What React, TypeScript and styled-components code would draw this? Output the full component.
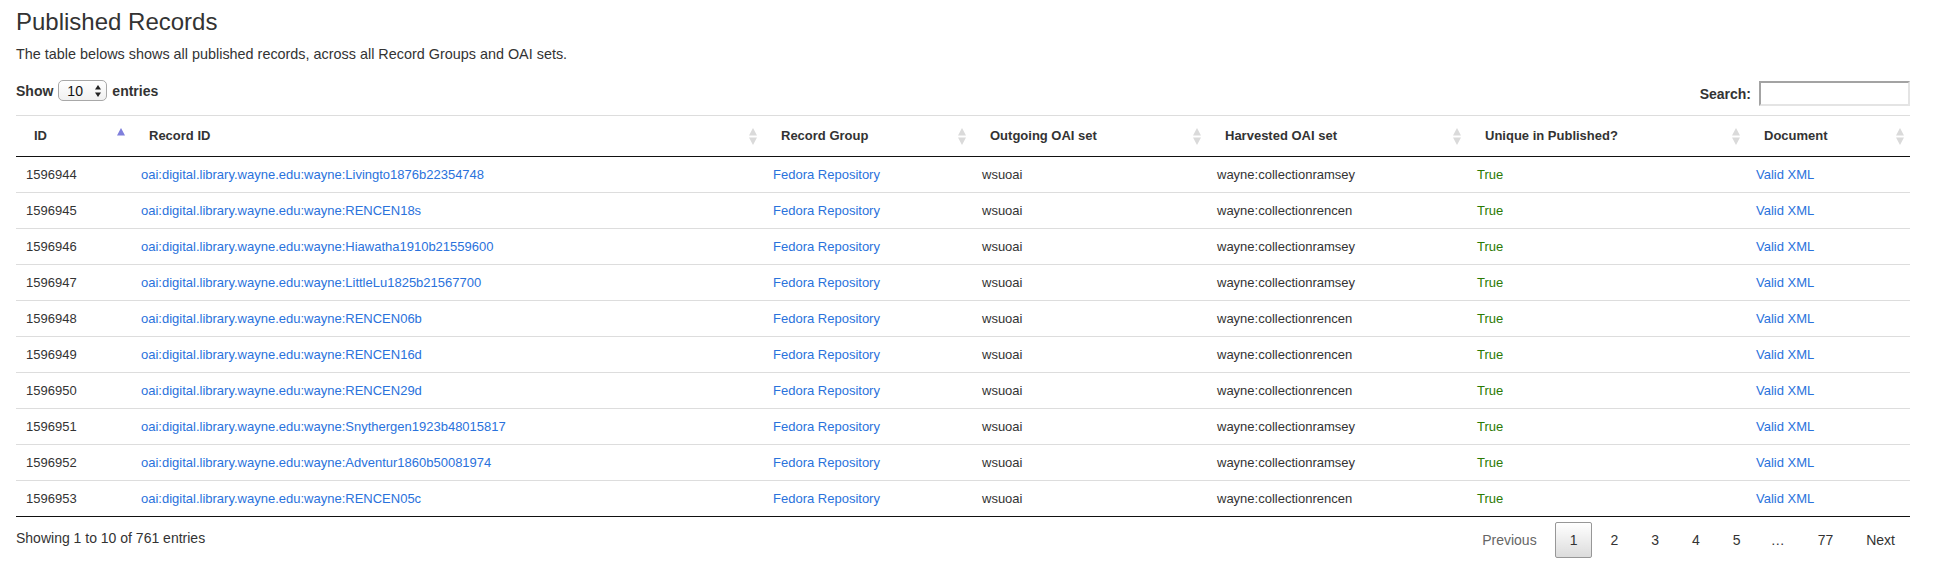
import React from "react";
import styled, { createGlobalStyle } from "styled-components";

const GlobalStyle = createGlobalStyle`
  html, body { margin: 0; padding: 0; background: #fff; }
  body {
    font-family: "Liberation Sans", Arial, Helvetica, sans-serif;
    font-size: 14px;
    line-height: 20px;
    color: #333;
  }
  * { box-sizing: border-box; }
`;

const Page = styled.div`
  padding: 9px 30px 0 16px;
`;

const Title = styled.h3`
  margin: 0;
  font-size: 24px;
  line-height: 26px;
  font-weight: normal;
  color: #333;
`;

const Lead = styled.p`
  margin: 9px 0 0;
  font-size: 14.4px;
  line-height: 20px;
`;

const Toolbar = styled.div`
  display: flex;
  justify-content: space-between;
  align-items: flex-start;
  margin-top: 16px;
`;

const LengthControl = styled.label`
  display: flex;
  align-items: center;
  height: 21px;
  font-weight: bold;
`;

const SelectBox = styled.div`
  display: flex;
  align-items: center;
  justify-content: space-between;
  width: 49px;
  height: 21px;
  margin: 0 5px;
  padding: 0 5px 0 8px;
  border: 1px solid #a8a8a8;
  border-radius: 5px;
  background: linear-gradient(#ffffff, #f0f0f0);
  font-weight: normal;
  color: #111;
`;

const FilterControl = styled.label`
  display: flex;
  align-items: center;
  margin-top: 1px;
  font-weight: bold;
`;

const SearchInput = styled.input`
  width: 151px;
  height: 25px;
  margin: 0 0 0 8px;
  padding: 2px 4px;
  border-style: solid;
  border-width: 2px;
  border-color: #a3a3a3 #e4e4e4 #e4e4e4 #a3a3a3;
  background: #fff;
  font: inherit;
  font-weight: normal;
  outline: none;
`;

const Table = styled.table`
  width: 100%;
  margin-top: 9px;
  border-collapse: separate;
  border-spacing: 0;
  table-layout: fixed;
  font-size: 13px;
`;

const Col = styled.col<{ $w: number }>`
  width: ${(p) => p.$w}px;
`;

const HeadCell = styled.th`
  position: relative;
  padding: 10px 18px;
  line-height: 20px;
  text-align: left;
  font-weight: bold;
  color: #333;
  white-space: nowrap;
  border-top: 1px solid #dddddd;
  border-bottom: 1px solid #111111;
`;

const SortIcon = styled.svg`
  position: absolute;
  top: 12px;
  right: 6px;
  width: 8px;
  height: 17px;
`;

const BodyRow = styled.tr`
  &:first-child td { border-top: none; }
  &:last-child td { border-bottom: 1px solid #111111; }
`;

const BodyCell = styled.td`
  padding: 8px 10px;
  line-height: 19px;
  border-top: 1px solid #dddddd;
  white-space: nowrap;
  overflow: hidden;
  color: #333;
`;

const Link = styled.a`
  color: #2a72dc;
  text-decoration: none;
`;

const Status = styled.span`
  color: #2c7a04;
`;

const Footer = styled.div`
  display: flex;
  justify-content: space-between;
  align-items: flex-start;
`;

const Info = styled.div`
  padding-top: 10.5px;
  line-height: 20px;
`;

const Paginate = styled.div`
  display: flex;
  align-items: center;
  padding-top: 5px;
`;

const PageButton = styled.a<{ $current?: boolean; $disabled?: boolean }>`
  display: inline-block;
  min-width: 1.5em;
  padding: 7px 14px;
  margin-left: 3px;
  line-height: 20px;
  text-align: center;
  border: 1px solid ${(p) => (p.$current ? "#979797" : "transparent")};
  border-radius: 2px;
  background: ${(p) => (p.$current ? "linear-gradient(to bottom, #ffffff 0%, #dcdcdc 100%)" : "transparent")};
  color: ${(p) => (p.$disabled ? "#666" : "#333")};
  cursor: pointer;
`;

const Ellipsis = styled.span`
  padding: 0 15px;
  line-height: 20px;
  color: #333;
`;

type Row = { id: string; rec: string; set: string };

const rows: Row[] = [
  { id: "1596944", rec: "Livingto1876b22354748", set: "ramsey" },
  { id: "1596945", rec: "RENCEN18s", set: "rencen" },
  { id: "1596946", rec: "Hiawatha1910b21559600", set: "ramsey" },
  { id: "1596947", rec: "LittleLu1825b21567700", set: "ramsey" },
  { id: "1596948", rec: "RENCEN06b", set: "rencen" },
  { id: "1596949", rec: "RENCEN16d", set: "rencen" },
  { id: "1596950", rec: "RENCEN29d", set: "rencen" },
  { id: "1596951", rec: "Snythergen1923b48015817", set: "ramsey" },
  { id: "1596952", rec: "Adventur1860b50081974", set: "ramsey" },
  { id: "1596953", rec: "RENCEN05c", set: "rencen" },
];

const columns = [
  { label: "ID", w: 115, asc: true },
  { label: "Record ID", w: 632 },
  { label: "Record Group", w: 209 },
  { label: "Outgoing OAI set", w: 235 },
  { label: "Harvested OAI set", w: 260 },
  { label: "Unique in Published?", w: 279 },
  { label: "Document", w: 164 },
];

const Sort: React.FC<{ asc?: boolean }> = ({ asc }) => (
  <SortIcon viewBox="0 0 8 17">
    {asc ? (
      <polygon points="4,0 8,7.5 0,7.5" fill="#7f7fdc" />
    ) : (
      <>
        <polygon points="4,0 8,7.5 0,7.5" fill="#dadada" />
        <polygon points="0,9.5 8,9.5 4,17" fill="#dadada" />
      </>
    )}
  </SortIcon>
);

const SelectArrows = () => (
  <svg width="6" height="12" viewBox="0 0 6 12">
    <polygon points="3,0 6,4.5 0,4.5" fill="#222" />
    <polygon points="0,7.5 6,7.5 3,12" fill="#222" />
  </svg>
);

export default function App() {
  return (
    <>
      <GlobalStyle />
      <Page>
        <Title>Published Records</Title>
        <Lead>The table belows shows all published records, across all Record Groups and OAI sets.</Lead>
        <Toolbar>
          <LengthControl>
            Show
            <SelectBox role="listbox">
              <span>10</span>
              <SelectArrows />
            </SelectBox>
            entries
          </LengthControl>
          <FilterControl>
            Search:
            <SearchInput type="search" />
          </FilterControl>
        </Toolbar>
        <Table>
          <colgroup>
            {columns.map((c) => (
              <Col key={c.label} $w={c.w} />
            ))}
          </colgroup>
          <thead>
            <tr>
              {columns.map((c) => (
                <HeadCell key={c.label}>
                  {c.label}
                  <Sort asc={c.asc} />
                </HeadCell>
              ))}
            </tr>
          </thead>
          <tbody>
            {rows.map((r) => (
              <BodyRow key={r.id}>
                <BodyCell>{r.id}</BodyCell>
                <BodyCell>
                  <Link>oai:digital.library.wayne.edu:wayne:{r.rec}</Link>
                </BodyCell>
                <BodyCell>
                  <Link>Fedora Repository</Link>
                </BodyCell>
                <BodyCell>wsuoai</BodyCell>
                <BodyCell>wayne:collection{r.set}</BodyCell>
                <BodyCell>
                  <Status>True</Status>
                </BodyCell>
                <BodyCell>
                  <Link>Valid XML</Link>
                </BodyCell>
              </BodyRow>
            ))}
          </tbody>
        </Table>
        <Footer>
          <Info>Showing 1 to 10 of 761 entries</Info>
          <Paginate>
            <PageButton $disabled>Previous</PageButton>
            <PageButton $current>1</PageButton>
            <PageButton>2</PageButton>
            <PageButton>3</PageButton>
            <PageButton>4</PageButton>
            <PageButton>5</PageButton>
            <Ellipsis>…</Ellipsis>
            <PageButton>77</PageButton>
            <PageButton>Next</PageButton>
          </Paginate>
        </Footer>
      </Page>
    </>
  );
}
